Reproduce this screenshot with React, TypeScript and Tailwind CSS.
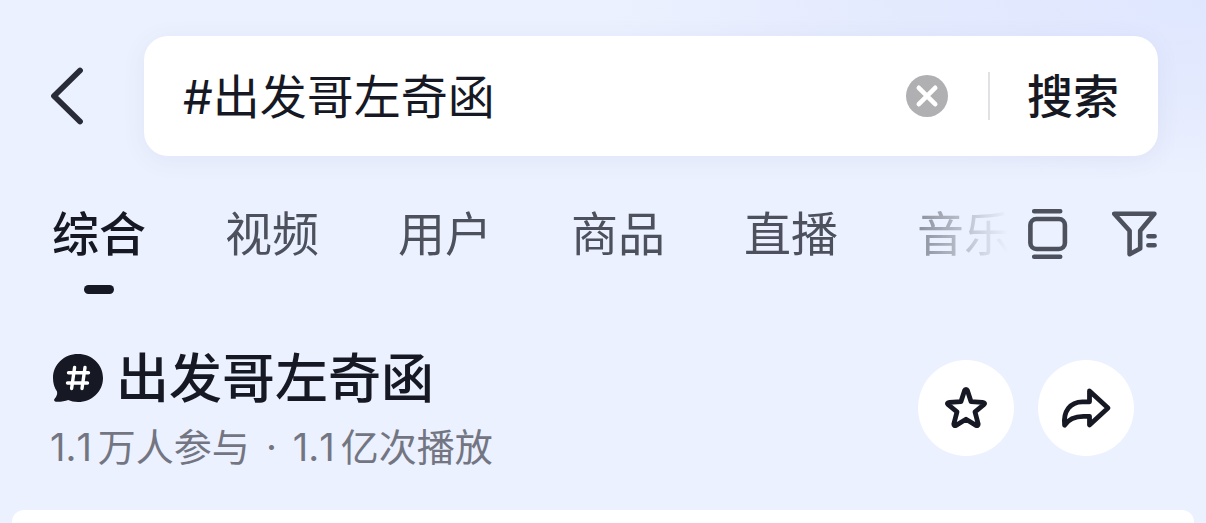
import { useState } from "react";

const tabs = ["综合", "视频", "用户", "商品", "直播", "音乐"];

function BackIcon() {
  return (
    <svg width="36" height="60" viewBox="0 0 36 60" fill="none" stroke="#292c38" strokeWidth="5.8" strokeLinecap="round" strokeLinejoin="round" aria-hidden="true">
      <path d="M32 4.500 6 30l26 25.500" />
    </svg>
  );
}

function ClearIcon() {
  return (
    <svg width="42" height="42" viewBox="0 0 42 42" aria-hidden="true">
      <circle cx="21" cy="21" r="21" fill="#b0b0b3" />
      <path d="M12.800 12.800l16.400 16.400M29.200 12.800 12.800 29.200" stroke="#fff" strokeWidth="4.600" strokeLinecap="round" />
    </svg>
  );
}

function CardsIcon() {
  return (
    <svg width="40" height="52" viewBox="0 0 40 52" fill="none" stroke="#4d505d" strokeWidth="4.600" strokeLinecap="round" aria-hidden="true">
      <path d="M6.200 3.200h26M6.200 48.700h26" />
      <rect x="2.400" y="11" width="34.500" height="30" rx="6" />
    </svg>
  );
}

function FilterIcon() {
  return (
    <svg width="46" height="48" viewBox="0 0 46 48" fill="none" stroke="#4d505d" strokeWidth="4.600" strokeLinecap="round" strokeLinejoin="round" aria-hidden="true">
      <path d="M2.200 3.700H42.400L28.200 20.800V38.500L17.600 44.200V20.800Z" />
      <path d="M36.400 26.200h6.200M36.400 35.200h6.200" />
    </svg>
  );
}

function TopicIcon() {
  return (
    <svg className="shrink-0" width="52" height="50" viewBox="0 0 52 50" aria-hidden="true">
      <path d="M26 0C40 0 51 10.500 51 24S40 48 26 48c-4 0-7-.7-9.800-2-3.500 1.400-7.800 1.900-12.400 1.700-1.600-.1-2.300-1.700-1.200-2.900 2.200-2.400 3-5 2.400-7.300C2.300 33.600 1 29.200 1 24 1 10.500 12 0 26 0Z" fill="#161824" />
      <path d="M22.600 13.500l-3 21M33 13.500l-3 21M16.500 18.800h20M15.500 29h20" fill="none" stroke="#fff" strokeWidth="3.400" strokeLinecap="round" />
    </svg>
  );
}

function StarIcon() {
  return (
    <svg width="44" height="44" viewBox="0 0 44 44" fill="none" stroke="#161824" strokeWidth="4.800" strokeLinejoin="round" aria-hidden="true">
      <path d="M22 3.500Q23 3.500 23.400 4.500L27 15.600 38.500 16.400Q41.800 17 39.800 18.700L31 25.800 34.200 38Q34.200 40.200 32 39.400L22 33.300 12 39.400Q9.800 40.200 9.800 38L13 25.800 4.200 18.700Q2.200 17 5.500 16.400L17 15.600 20.600 4.500Q21 3.500 22 3.500Z" />
    </svg>
  );
}

function ShareIcon() {
  return (
    <svg width="52" height="44" viewBox="0 0 52 44" fill="none" stroke="#161824" strokeWidth="4.800" strokeLinejoin="round" aria-hidden="true">
      <path d="M29.500 5 48 22 29.500 39V30.300H23.500C14 30.300 8.500 33 4.600 39.300 3 25.500 10 15.800 22.500 15.800h7Z" />
    </svg>
  );
}

export default function App() {
  const [query, setQuery] = useState("#出发哥左奇函");
  const [active, setActive] = useState("综合");

  return (
    <div className="flex flex-col overflow-hidden bg-[#ebf1fe] bg-[radial-gradient(ellipse_50%_180px_at_100%_0%,#dfe7ff_0%,#e4eafe_50%,#ebf1fe_100%)] font-['Inter','Noto_Sans_CJK_SC',sans-serif] text-[#161824]">
      <header className="flex items-center pt-9 pr-12 pl-12">
        <button type="button" aria-label="返回" className="w-24 shrink-0">
          <BackIcon />
        </button>
        <form
          className="flex h-30 min-w-0 flex-1 items-center rounded-3xl bg-white pr-[39px] pl-[39px] shadow-[0_4px_24px_rgba(80,90,140,0.07)]"
          onSubmit={(e) => e.preventDefault()}
        >
          <input
            aria-label="搜索内容"
            className="h-18 min-w-0 flex-1 bg-transparent pb-1.5 text-[47px] outline-none"
            value={query}
            onChange={(e) => setQuery(e.target.value)}
          />
          <button type="button" aria-label="清除" className="shrink-0" onClick={() => setQuery("")}>
            <ClearIcon />
          </button>
          <span className="mr-[37px] ml-10 h-12 w-0.5 shrink-0 bg-[#e2e2e4]" />
          <button type="submit" className="shrink-0 text-[46px] leading-18 font-medium">
            搜索
          </button>
        </form>
      </header>

      <div className="flex items-start pt-[42px] pr-12 pl-[52px]">
        <nav
          aria-label="搜索分类"
          className="flex min-w-0 flex-1 gap-[79px] overflow-hidden [mask-image:linear-gradient(to_right,#000_calc(100%-150px),transparent_100%)]"
        >
          {tabs.map((tab) => (
            <button
              key={tab}
              type="button"
              onClick={() => setActive(tab)}
              className={
                "flex shrink-0 flex-col items-center text-[47px] leading-[72px] " +
                (tab === active ? "font-medium text-[#161824]" : "text-[#4d505d]")
              }
            >
              {tab}
              {tab === active && <span className="mt-[15px] h-[9px] w-[30px] rounded-full bg-[#161824]" />}
            </button>
          ))}
        </nav>
        <div className="ml-5 flex shrink-0 items-center gap-11 pt-2.5">
          <button type="button" aria-label="浏览模式">
            <CardsIcon />
          </button>
          <button type="button" aria-label="筛选">
            <FilterIcon />
          </button>
        </div>
      </div>

      <section className="flex items-start justify-between pt-12 pr-18 pl-[50px]">
        <div>
          <h1 className="flex items-center gap-3 pl-0.5 text-[53px] leading-[74px] font-medium">
            <TopicIcon />
            出发哥左奇函
          </h1>
          <p className="flex gap-1.5 text-[38px] leading-[62px] text-[#737682] [font-kerning:none]">
            <span>1.1</span>
            <span>万人参与</span>
            <span className="px-2.5">·</span>
            <span>1.1</span>
            <span>亿次播放</span>
          </p>
        </div>
        <div className="flex gap-6 pt-[18px]">
          <button type="button" aria-label="收藏" className="flex size-24 items-center justify-center rounded-full bg-white">
            <StarIcon />
          </button>
          <button type="button" aria-label="分享" className="flex size-24 items-center justify-center rounded-full bg-white">
            <ShareIcon />
          </button>
        </div>
      </section>

      <main className="mx-3 mt-8 h-[13px] rounded-t-xl bg-white" />
    </div>
  );
}
